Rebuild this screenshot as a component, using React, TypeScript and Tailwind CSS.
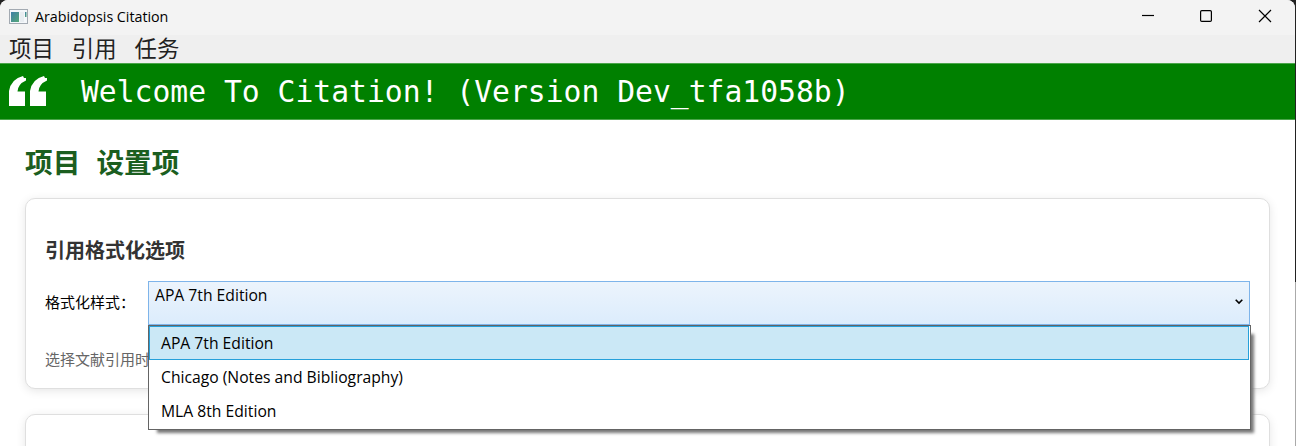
import React from "react";

const options = ["APA 7th Edition", "Chicago (Notes and Bibliography)", "MLA 8th Edition"];

const uiFont = "font-['Open_Sans','Noto_Sans_CJK_SC',sans-serif]";
const cjkFont = "font-['Noto_Sans_CJK_SC',sans-serif]";

function TitleBar() {
  return (
    <header className="flex h-[35px] items-center bg-[#f3f3f3] pl-[9px]">
      <svg width="20" height="16" viewBox="0 0 20 16" className="mb-0.5">
        <defs>
          <linearGradient id="pane" x1="0" y1="0" x2="1" y2="1">
            <stop offset="0" stopColor="#3f7fa6" />
            <stop offset="1" stopColor="#55a878" />
          </linearGradient>
        </defs>
        <rect x="0.5" y="0.5" width="18" height="14" fill="#f4f7fa" stroke="#a3aab2" />
        <rect x="2" y="3" width="8" height="10" fill="url(#pane)" />
        <rect x="11" y="3" width="4" height="10" fill="#e8edf1" />
        <rect x="16" y="3" width="1.5" height="5" fill="url(#pane)" />
      </svg>
      <span className={`mb-0.5 ml-1.5 text-[14.3px] tracking-[-0.03px] whitespace-nowrap text-black ${uiFont}`}>Arabidopsis Citation</span>
      <svg className="ml-auto" width="154" height="35" viewBox="0 0 154 35" fill="none" stroke="#000" strokeWidth="1.2">
        <path d="M1 15.5h12" />
        <rect x="59.6" y="10.6" width="10.8" height="10.8" rx="1.2" />
        <path d="m118 10 12 12m0-12-12 12" />
      </svg>
    </header>
  );
}

function MenuBar() {
  return (
    <nav className={`flex h-7 items-start gap-[18px] bg-[#efefef] pl-[9px] text-[22.4px] leading-[25px] text-[#212121] ${cjkFont}`}>
      <span>项目</span>
      <span>引用</span>
      <span>任务</span>
    </nav>
  );
}

function Banner() {
  return (
    <div className="flex h-[57px] items-center border-y border-[#4aa54a] bg-[#008000] pl-[9px]">
      <svg className="mb-0.5" width="38" height="30" viewBox="0 0 38 30" fill="#fff">
        <path d="M0 30V15Q2 3 14 0L15 2H17V4.500Q9 8 8.500 15.500H16V30Z" />
        <path d="M21 30V15Q23 3 35 0L36 2H38V4.500Q30 8 29.500 15.500H37V30Z" />
      </svg>
      <span className="mt-0.5 ml-[34px] font-['DejaVu_Sans_Mono',monospace] text-[29.7px] whitespace-nowrap text-white">
        Welcome To Citation! (Version Dev_tfa1058b)
      </span>
    </div>
  );
}

function Dropdown() {
  return (
    <div className={`relative h-11 w-[1102px] border border-[#7eb4ea] bg-linear-to-b from-[#ecf4fc] to-[#dcecfc] text-[15.7px] text-black ${uiFont}`}>
      <div className="flex justify-between pl-1.5">
        <span className="leading-[26px]">APA 7th Edition</span>
        <svg className="mt-[17px] mr-[6.5px]" width="8" height="6" viewBox="0 0 8 6" fill="none" stroke="#000" strokeWidth="1.6">
          <path d="m.7.8 3.3 3.3L7.3.8" />
        </svg>
      </div>
      <ul className="absolute top-[43px] -left-px z-10 h-[105px] w-[1103px] border border-[#646464] bg-white shadow-[6px_6px_3px_-3px_#777]">
        {options.map((label, i) => (
          <li
            key={label}
            className={`mr-px flex h-[34px] items-center border pt-0.5 pl-[11px] whitespace-nowrap ${
              i === 0 ? "border-[#26a0da] bg-[#cbe8f6]" : "border-transparent"
            }`}
          >
            {label}
          </li>
        ))}
      </ul>
    </div>
  );
}

export default function App() {
  return (
    <div className="h-[446px] w-[1296px] overflow-hidden bg-linear-to-b from-[#222] from-[282px] to-[#aaa] to-[282px]">
      <div className="h-[446px] w-[1295px] overflow-hidden rounded-t-[8px] bg-white">
        <TitleBar />
        <MenuBar />
        <Banner />
        <main className={`px-[25px] ${cjkFont}`}>
          <h1 className="h-[78px] pt-[21px] text-[27.7px] leading-10 font-bold text-[#1b5e20]">
            项目<span className="ml-4">设置项</span>
          </h1>
          <section className="h-[191px] w-[1245px] rounded-[10px] border border-[#dfdfdf] bg-white px-[19px] shadow-[0_2px_10px_rgba(0,0,0,0.1)]">
            <h2 className="pt-[36px] text-[20px] leading-[30px] font-bold text-[#333]">引用格式化选项</h2>
            <div className="mt-[16px] flex">
              <label className="w-[103px] pt-[9px] text-[15px] leading-6 text-black">格式化样式：</label>
              <Dropdown />
            </div>
            <p className="pt-[22px] text-[15px] leading-6 text-[#666]">选择文献引用时</p>
          </section>
          <section className="mt-[25px] h-[100px] w-[1245px] rounded-[10px] border border-[#dfdfdf] bg-white shadow-[0_2px_10px_rgba(0,0,0,0.1)]" />
        </main>
      </div>
    </div>
  );
}
